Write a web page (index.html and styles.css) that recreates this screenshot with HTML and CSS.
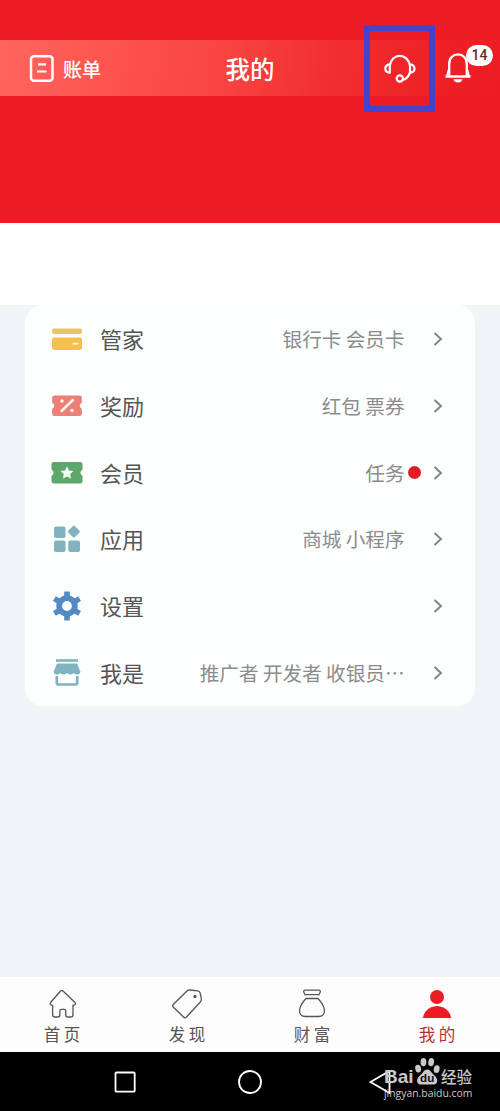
FILE: index.html
```html
<!DOCTYPE html>
<html lang="zh-CN">
<head>
<meta charset="utf-8">
<title>我的</title>
<link rel="stylesheet" href="styles.css">
</head>
<body>
<div class="screen">
  <header class="header">
    <div class="bar">
      <div class="bill">
        <svg width="26" height="28" viewBox="0 0 26 28" fill="none" stroke="#fff" stroke-width="2.5"><rect x="3" y="1.300" width="21.500" height="24.400" rx="3"/><path d="M10 9.300h8M9 16.500h9.500" stroke-width="2.2"/></svg>
        <span class="bill-text">账单</span>
      </div>
      <h1 class="title">我的</h1>
      <div class="actions">
        <div class="service">
          <svg width="32" height="30" viewBox="0 0 32 30" fill="none" stroke="#fff" stroke-width="2.2"><path d="M5.800 19.500V11.500C7 5.500 11 1.800 15.800 1.800s9 3.700 10.200 9.700v6.500q-1.500 6.500-7.300 8"/><path d="M5.800 10.300q-4.500.5-4.500 4.200t4.500 4.200M26 10.300q4.500.5 4.500 4.200T26 18.700"/><circle cx="15.800" cy="24.500" r="3.100"/></svg>
        </div>
        <div class="bell">
          <svg width="26" height="32" viewBox="0 0 26 32" fill="none" stroke="#fff" stroke-width="2.3"><path d="M4.200 23V11C4.200 5 8 1.400 13 1.400S21.800 5 21.800 11v12M3.800 17 2.200 23.400M22.200 17l1.600 6.400M.5 23.500h25"/><path d="M8.500 26.300h9q-1 3.300-4.500 3.300t-4.500-3.300z" fill="#fff" stroke="none"/></svg>
          <span class="badge">14</span>
        </div>
      </div>
    </div>
  </header>
  <div class="band"></div>
  <main class="main">
    <ul class="card">
      <li class="row">
        <svg class="icon" viewBox="0 0 32 32"><rect x="1" y="5.500" width="30" height="5.500" rx="2" fill="#eac45f"/><rect x="1" y="14.500" width="30" height="12.500" rx="2.500" fill="#f4c14f"/><path d="M22.500 20.700h4" stroke="#fff1cc" stroke-width="2" stroke-linecap="round"/></svg>
        <span class="label">管家</span><span class="value">银行卡 会员卡</span>
        <svg class="arrow" viewBox="0 0 10 14"><path d="m1.500 1 6.500 6-6.500 6"/></svg>
      </li>
      <li class="row">
        <svg class="icon" viewBox="0 0 32 32"><path d="M3.500 5.500h25q2.300 0 2.300 2.300v5a3.200 3.200 0 0 0 0 6v5q0 2.300-2.300 2.300h-25q-2.300 0-2.300-2.300v-5a3.200 3.200 0 0 0 0-6v-5q0-2.300 2.300-2.300z" fill="#ec7f77"/><path d="m10.500 21 11.500-11" stroke="#fff4ec" stroke-width="2.500" stroke-linecap="round"/><circle cx="11" cy="11" r="1.800" fill="#fff4ec"/><circle cx="21" cy="20.500" r="1.800" fill="#fff4ec"/></svg>
        <span class="label">奖励</span><span class="value">红包 票券</span>
        <svg class="arrow" viewBox="0 0 10 14"><path d="m1.500 1 6.500 6-6.500 6"/></svg>
      </li>
      <li class="row">
        <svg class="icon" viewBox="0 0 32 32"><path d="M2.800 5h26.400Q31.500 5 31.500 7.300v5.500a3.200 3.200 0 0 0 0 6v5.500q0 2.300-2.300 2.300H2.800Q.5 26.600.5 24.300v-5.500a3.200 3.200 0 0 0 0-6V7.300Q.5 5 2.800 5z" fill="#5da76c"/><path d="m16 9.300 2 4.100 4.500.6-3.300 3.100.8 4.500-4-2.200-4 2.200.8-4.500L9.500 14l4.500-.6z" fill="#f4fff4"/></svg>
        <span class="label">会员</span><span class="value">任务</span><span class="dot"></span>
        <svg class="arrow" viewBox="0 0 10 14"><path d="m1.500 1 6.500 6-6.500 6"/></svg>
      </li>
      <li class="row">
        <svg class="icon" viewBox="0 0 32 32" fill="#80b3bf"><rect x="3" y="3.500" width="11.500" height="11.500" rx="2"/><rect x="3" y="17.500" width="11.500" height="11.500" rx="2"/><rect x="17.300" y="17.500" width="11.700" height="11.500" rx="2"/><rect x="18.300" y="4" width="9.200" height="9.200" rx="1.500" transform="rotate(45 22.900 8.600)"/></svg>
        <span class="label">应用</span><span class="value">商城 小程序</span>
        <svg class="arrow" viewBox="0 0 10 14"><path d="m1.500 1 6.500 6-6.500 6"/></svg>
      </li>
      <li class="row">
        <svg class="icon" viewBox="0 0 32 32"><g stroke="#538ac4" stroke-width="5.600"><path d="M16 1.500v7M16 23.500v7M3.400 8.700l6 3.500M22.600 19.800l6 3.500M3.400 23.300l6-3.500M22.600 12.200l6-3.500"/></g><circle cx="16" cy="16" r="7.800" fill="none" stroke="#538ac4" stroke-width="5.800"/></svg>
        <span class="label">设置</span><span class="value"></span>
        <svg class="arrow" viewBox="0 0 10 14"><path d="m1.500 1 6.500 6-6.500 6"/></svg>
      </li>
      <li class="row">
        <svg class="icon" viewBox="0 0 32 32"><path d="M5 3.500h22" stroke="#80b3bf" stroke-width="2.600"/><path d="M6 6.500h20l3.500 8.500q-1.200 3-3.800 2.600-1.700 0-2.800-1.600-3.300 3.200-6.900 0-3.600 3.200-6.900 0-1.100 1.600-2.800 1.600-2.600.4-3.800-2.600z" fill="#80b3bf"/><path d="M5.800 19v6.500q0 2 2 2h16.400q2 0 2-2V19" fill="none" stroke="#80b3bf" stroke-width="2.700"/></svg>
        <span class="label">我是</span><span class="value">推广者 开发者 收银员…</span>
        <svg class="arrow" viewBox="0 0 10 14"><path d="m1.500 1 6.500 6-6.500 6"/></svg>
      </li>
    </ul>
  </main>
  <nav class="tabs">
    <div class="tab">
      <svg class="tab-icon" viewBox="0 0 32 32"><path d="m17 3 12 11.500q1.500 2.300-2 2.800v9.500q0 2.200-2.200 2.200h-3q-2 0-2-2v-4q0-1.700-1.700-1.700h-2.600q-1.700 0-1.700 1.700v4q0 2-2 2h-3q-2.200 0-2.200-2.200v-9.500q-3.500-.5-2-2.800L14.600 3q1.200-1.200 2.400 0z"/></svg>
      <span>首页</span>
    </div>
    <div class="tab">
      <svg class="tab-icon" viewBox="0 0 32 32"><path d="M2.200 16.500 16 3q1.300-1.200 3-1l7.500.8q2 .2 2.600 2l1.300 6q.2 2-1.300 3.400L15.500 29q-1.600 1.400-3 0L2 18.700q-.8-1.100.2-2.200z"/><circle cx="24" cy="8.500" r="1" fill="#555"/></svg>
      <span>发现</span>
    </div>
    <div class="tab">
      <svg class="tab-icon" viewBox="0 0 32 32"><path d="M9 2.200h14q2 .3 1 2.500l-1 2H9l-1-2q-1-2.200 1-2.500zM10 10.500h12q6 6.500 6.500 11.500.2 6.500-6 6.500h-13q-6.200 0-6-6.500Q4 17 10 10.500z"/></svg>
      <span>财富</span>
    </div>
    <div class="tab active">
      <svg class="tab-icon" viewBox="0 0 32 32"><circle cx="16" cy="9" r="7"/><path d="M2 30q.8-7 7.500-10.500Q16 16.500 22.500 19.500 29.200 23 30 30z"/></svg>
      <span>我的</span>
    </div>
  </nav>
  <footer class="sysnav">
    <svg class="sys-icon" viewBox="0 0 24 24"><rect x="2.500" y="2.500" width="19.200" height="19.200" rx="1"/></svg>
    <svg class="sys-icon" viewBox="0 0 24 24"><circle cx="12" cy="12" r="11"/></svg>
    <svg class="sys-icon back" viewBox="0 0 24 24"><path d="M2.500 12 21.500 1v22z"/></svg>
  </footer>
  <div class="watermark">
    <div class="brand">
      <span class="bai">Bai</span>
      <svg class="paw" width="27" height="29" viewBox="0 0 27 30"><g fill="#c9c9c9"><ellipse cx="3.800" cy="12" rx="3" ry="4" transform="rotate(-12 3.800 12)"/><ellipse cx="9.300" cy="5.300" rx="3" ry="4.300"/><ellipse cx="17.300" cy="5.300" rx="3" ry="4.300" transform="rotate(8 17.300 5.300)"/><ellipse cx="23" cy="12.500" rx="3" ry="4" transform="rotate(12 23 12.500)"/><path d="M13.200 13q3 0 5.300 4 5.500 4.500 5 8-.6 4-5 3.500H8q-4.600.5-5.300-3.500-.4-3.500 5.200-8 2.300-4 5.300-4z"/></g><text class="du" x="13.200" y="26" text-anchor="middle">du</text></svg>
      <span class="jingyan">经验</span>
    </div>
    <div class="url">jingyan.baidu.com</div>
  </div>
</div>
</body>
</html>
```

FILE: styles.css
```css
* { box-sizing: border-box; }

body {
  margin: 0;
  font-family: "Noto Sans CJK SC", "Noto Sans", sans-serif;
}

.screen {
  position: relative;
  display: flex;
  flex-direction: column;
  width: 500px;
  height: 1111px;
  overflow: hidden;
  background: #f2f5f8;
}

svg { display: block; flex: none; }

.header {
  height: 223px;
  padding-top: 40px;
  background: #ed1c24;
}

.bar {
  display: grid;
  grid-template-columns: 1fr auto 1fr;
  align-items: center;
  height: 56px;
  background: linear-gradient(100deg, #ff665e 0%, #fc4f4b 28%, #f84441 45%, #f1302f 65%, #ee2226 84%, #ed1c24 100%);
  color: #fff;
}

.bill {
  display: flex;
  align-items: center;
  gap: 9px;
  padding-left: 28px;
}

.bill-text {
  font-size: 19px;
  line-height: 28px;
  font-weight: 500;
}

.title {
  margin: 0;
  font-size: 24.5px;
  line-height: 36px;
  font-weight: 500;
}

.actions {
  display: flex;
  align-items: center;
  justify-content: flex-end;
  gap: 10px;
  padding-right: 29px;
}

.service {
  display: grid;
  place-items: center;
  width: 71px;
  height: 87px;
  margin: -15px 0;
  border: 6px solid #4444ca;
}

.bell { position: relative; }

.badge {
  position: absolute;
  left: 21px;
  top: -8px;
  width: 27px;
  height: 21px;
  border-radius: 11px;
  background: #fff;
  color: #6b252e;
  font: 500 14px/21px Roboto, sans-serif;
  text-align: center;
}

.band {
  height: 82px;
  background: #fff;
}

.main {
  flex: 1;
  padding: 0 25px;
}

.card {
  display: grid;
  grid-template-rows: repeat(6, 66.7px);
  margin: 0;
  padding: 1px 32px 0 26px;
  border-radius: 18px;
  background: #fdfefe;
  list-style: none;
}

.row {
  display: flex;
  align-items: center;
}

.icon {
  width: 32px;
  height: 32px;
}

.label {
  margin-left: 17px;
  padding-bottom: 2px;
  color: #555;
  font-size: 22px;
  line-height: 32px;
}

.value {
  flex: 1;
  margin-right: 28.5px;
  color: #8c8c8c;
  font-size: 19.6px;
  line-height: 30px;
  text-align: right;
  white-space: nowrap;
}

.dot {
  width: 13px;
  height: 13px;
  margin-left: -25px;
  margin-right: 12px;
  border-radius: 50%;
  background: #e21b25;
}

.arrow {
  width: 10px;
  height: 14px;
  fill: none;
  stroke: #858585;
  stroke-width: 2;
}

.tabs {
  display: grid;
  grid-template-columns: repeat(4, 1fr);
  height: 75px;
  background: #fdfdfd;
}

.tab {
  display: flex;
  flex-direction: column;
  align-items: center;
  padding-top: 11px;
  color: #555;
  font-size: 16.5px;
  line-height: 24px;
  letter-spacing: 3.5px;
}

.tab span {
  margin-top: 2px;
  margin-right: -2.5px;
}

.tab-icon {
  width: 32px;
  height: 32px;
  margin-left: -2px;
  fill: none;
  stroke: #555;
  stroke-width: 1.3;
}

.active { color: #ba2f3a; }

.active .tab-icon {
  fill: #ed1c24;
  stroke: none;
}

.sysnav {
  display: flex;
  align-items: center;
  justify-content: center;
  gap: 101px;
  height: 59px;
  background: #000;
}

.sys-icon {
  width: 24px;
  height: 24px;
  fill: none;
  stroke: #fff;
  stroke-width: 1.8;
}

.back { margin-left: 5px; margin-right: -5px; }

.watermark {
  position: absolute;
  left: 384px;
  top: 1057px;
  color: #c9c9c9;
}

.brand {
  display: flex;
  align-items: flex-end;
  height: 29px;
}

.bai {
  width: 30px;
  font: 700 19px/19px "Liberation Sans", sans-serif;
}

.jingyan {
  font-size: 15.5px;
  line-height: 20px;
  font-weight: 500;
}

.du {
  font: 700 12px "Liberation Sans", sans-serif;
  fill: #111;
}

.url {
  margin-top: 1px;
  font: 10.4px/13px "Open Sans", sans-serif;
}
```
